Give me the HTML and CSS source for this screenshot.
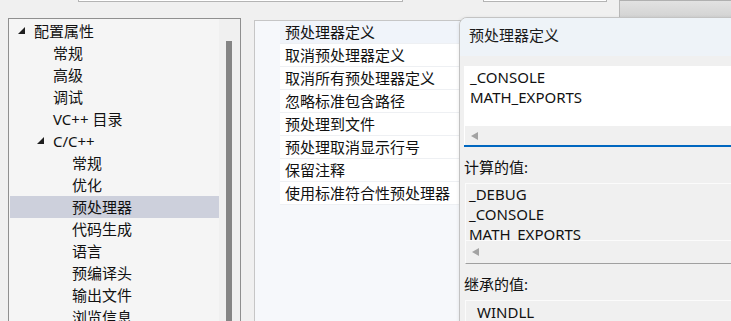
FILE: index.html
```html
<!DOCTYPE html>
<html lang="zh-CN">
<head>
<meta charset="utf-8">
<title>预处理器</title>
<link rel="stylesheet" href="styles.css">
</head>
<body>
<div class="page">
  <div class="topbar">
    <div class="combo combo-a"></div>
    <div class="combo combo-b"></div>
    <div class="tbtn"></div>
  </div>
  <div class="main">
    <div class="tree-panel">
      <ul class="tree">
        <li class="row lv0"><span class="tog"><i class="tri"></i></span>配置属性</li>
        <li class="row lv1"><span class="tog"></span>常规</li>
        <li class="row lv1"><span class="tog"></span>高级</li>
        <li class="row lv1"><span class="tog"></span>调试</li>
        <li class="row lv1"><span class="tog"></span>VC++ 目录</li>
        <li class="row lv1"><span class="tog"><i class="tri"></i></span>C/C++</li>
        <li class="row lv2"><span class="tog"></span>常规</li>
        <li class="row lv2"><span class="tog"></span>优化</li>
        <li class="row lv2 sel"><span class="tog"></span>预处理器</li>
        <li class="row lv2"><span class="tog"></span>代码生成</li>
        <li class="row lv2"><span class="tog"></span>语言</li>
        <li class="row lv2"><span class="tog"></span>预编译头</li>
        <li class="row lv2"><span class="tog"></span>输出文件</li>
        <li class="row lv2"><span class="tog"></span>浏览信息</li>
      </ul>
      <div class="vscroll"><div class="thumb"></div></div>
    </div>
    <div class="grid-panel">
      <div class="prow active"><span class="pname">预处理器定义</span></div>
      <div class="prow"><span class="pname">取消预处理器定义</span></div>
      <div class="prow"><span class="pname">取消所有预处理器定义</span></div>
      <div class="prow"><span class="pname">忽略标准包含路径</span></div>
      <div class="prow"><span class="pname">预处理到文件</span></div>
      <div class="prow"><span class="pname">预处理取消显示行号</span></div>
      <div class="prow"><span class="pname">保留注释</span></div>
      <div class="prow"><span class="pname">使用标准符合性预处理器</span></div>
    </div>
  </div>
  <div class="dialog">
    <div class="dlg-title">预处理器定义</div>
    <div class="dlg-body">
      <div class="edit focus">
        <div class="lines">
          <div>_CONSOLE</div>
          <div>MATH_EXPORTS</div>
        </div>
        <div class="hscroll"><i class="larr"></i></div>
      </div>
      <div class="label">计算的值:</div>
      <div class="edit ro computed">
        <div class="lines clip">
          <div>_DEBUG</div>
          <div>_CONSOLE</div>
          <div>MATH_EXPORTS</div>
        </div>
        <div class="hscroll ro-scroll"><i class="larr"></i></div>
      </div>
      <div class="label">继承的值:</div>
      <div class="edit ro inherited">
        <div class="lines inh">
          <div>WINDLL</div>
        </div>
      </div>
    </div>
  </div>
</div>
</body>
</html>
```
FILE: styles.css
```css
* { box-sizing: border-box; }
html, body { margin: 0; padding: 0; }
body {
  background: #f0f0f0;
  font-family: "Noto Sans", "Noto Sans CJK SC", sans-serif;
  font-size: 15px;
  color: #111;
  width: 731px;
  height: 321px;
  overflow: hidden;
}
.page {
  position: relative;
  width: 731px;
  height: 321px;
  overflow: hidden;
}
.topbar {
  height: 18px;
  display: flex;
  align-items: flex-start;
}
.combo {
  height: 2px;
  background: #fff;
  border: 1px solid #b4b4b4;
  border-top: none;
}
.combo-a { margin-left: 78px; width: 325px; }
.combo-b { margin-left: 80px; width: 124px; }
.tbtn {
  margin-left: 12px;
  flex: 1;
  height: 18px;
  border-top: 1px solid #b0b0b0;
  border-bottom: 1px solid #b8b8b8;
  border-left: 1px solid #b8b8b8;
  background: linear-gradient(#e2e2e2, #d3d3d3);
}

.main {
  display: flex;
  align-items: flex-start;
  height: 303px;
}
.tree-panel {
  margin-left: 8px;
  width: 233px;
  height: 320px;
  border: 1px solid #8f8f8f;
  display: flex;
  background: #f0f0f0;
}
.tree {
  list-style: none;
  margin: 0;
  padding: 1px 0 0 1px;
  width: 210px;
  background: #f5f5f5;
}
.row {
  height: 22px;
  line-height: 22px;
  display: flex;
  align-items: center;
  white-space: nowrap;
  color: #111;
}
.row.lv0 { padding-left: 8px; }
.row.lv1 { padding-left: 27px; }
.row.lv2 { padding-left: 46px; }
.row.sel { background: #cdd0dc; }
.tog {
  width: 16px;
  height: 22px;
  flex: none;
  display: flex;
  align-items: center;
}
.tri {
  display: block;
  width: 0;
  height: 0;
  border-left: 7px solid transparent;
  border-bottom: 7px solid #1e1e1e;
  margin-top: -1px;
}
.vscroll {
  width: 21px;
  background: #f0f0f0;
  padding: 22px 0 0 7px;
}
.thumb {
  width: 6px;
  height: 300px;
  background: #858585;
}

.grid-panel {
  margin-left: 13px;
  margin-top: 2px;
  width: 500px;
  height: 320px;
  border: 1px solid #c6c6c6;
  background: #f6f8fb;
  padding-left: 25px;
}
.prow {
  height: 23px;
  line-height: 22px;
  background: #fff;
  border-bottom: 1px solid #eef0f3;
  padding-left: 5px;
  white-space: nowrap;
}
.prow.active {
  background: #f0f4fa;
}

.dialog {
  position: absolute;
  left: 459px;
  top: 17px;
  width: 300px;
  height: 330px;
  border: 1px solid #c3c3c3;
  border-top-left-radius: 8px;
  background: #f0f0f0;
  overflow: hidden;
  box-shadow: -1px 0 3px rgba(0,0,0,0.06);
}
.dlg-title {
  height: 38px;
  line-height: 34px;
  padding-left: 9px;
  background: #eef3f8;
  color: #1a1a1a;
}
.dlg-body {
  padding: 10px 0 0 5px;
}
.edit {
  background: #fff;
  width: 300px;
}
.edit.focus {
  height: 81px;
  border-bottom: 2px solid #0067c0;
  margin-left: -1px;
  padding-left: 1px;
}
.lines {
  line-height: 20px;
  padding: 1px 0 0 5px;
  height: 60px;
  color: #111;
}
.hscroll {
  height: 19px;
  background: #f0f0f0;
  position: relative;
}
.larr {
  position: absolute;
  left: 6px;
  top: 6px;
  width: 0;
  height: 0;
  border-top: 4px solid transparent;
  border-bottom: 4px solid transparent;
  border-right: 7px solid #a3a3a3;
}
.label {
  height: 36px;
  line-height: 20px;
  padding: 10px 0 0 0;
  margin-left: -1px;
  color: #111;
}
.edit.ro {
  background: #f0f0f0;
  border: 1px solid #fbfbfb;
}
.edit.computed {
  height: 81px;
  border-bottom: 1px solid #a0a0a0;
}
.lines.clip {
  height: 57px;
  overflow: hidden;
  padding: 0 0 0 3px;
  line-height: 20px;
  border-bottom: 1px solid #fbfbfb;
}
.ro-scroll {
  height: 21px;
}
.ro-scroll .larr { top: 7px; }
.edit.inherited {
  height: 40px;
}
.lines.inh {
  padding: 1px 0 0 11px;
}
```
